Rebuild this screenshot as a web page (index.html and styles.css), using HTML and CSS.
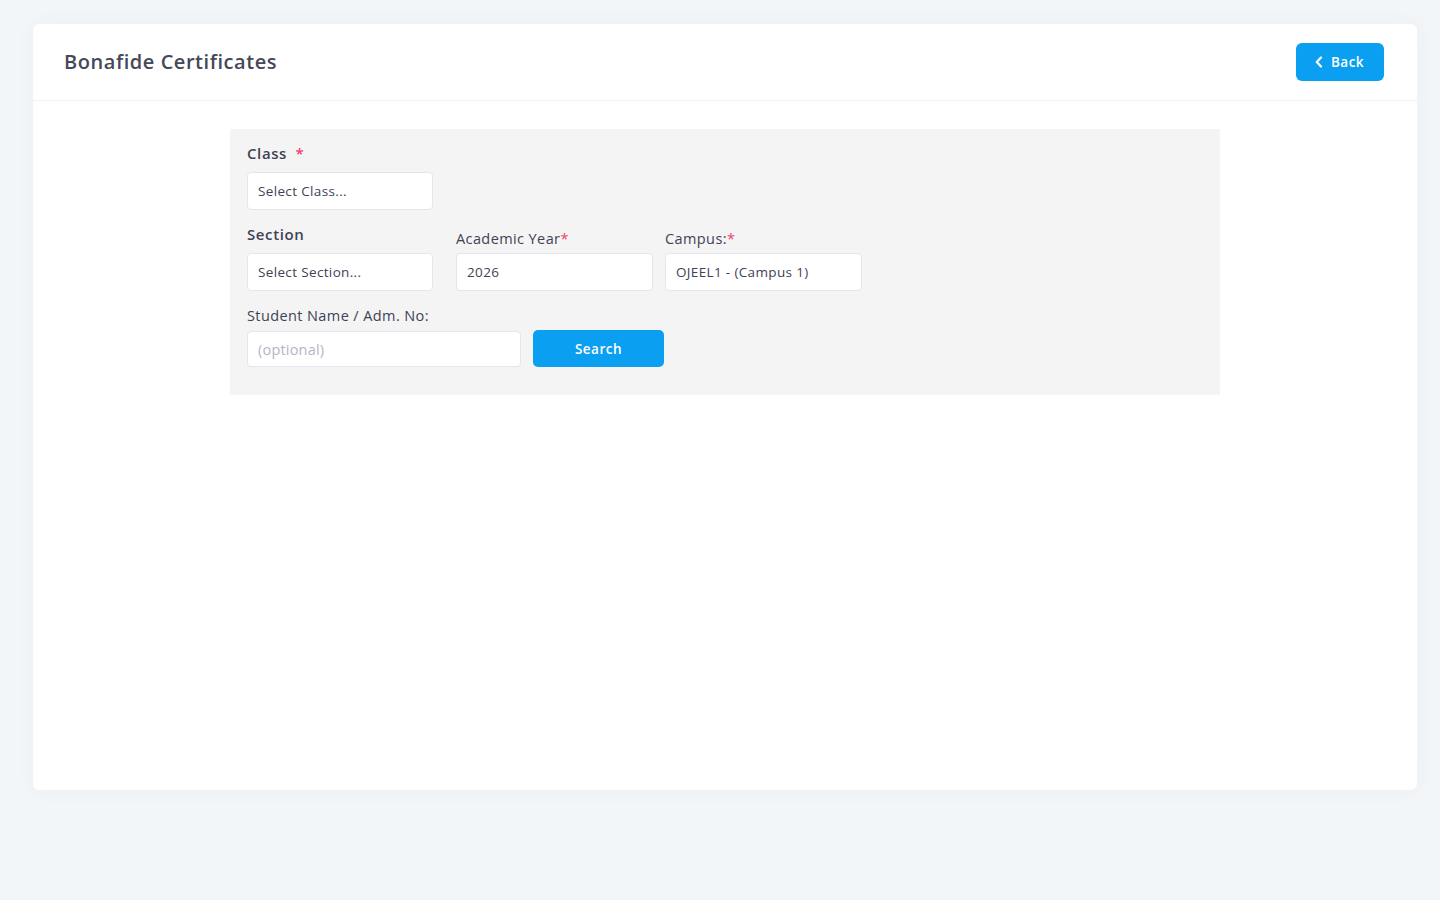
FILE: index.html
```html
<!DOCTYPE html>
<html lang="en">
<head>
<meta charset="utf-8">
<title>Bonafide Certificates</title>
<link rel="stylesheet" href="styles.css">
</head>
<body>
<div class="page">
  <div class="card">
    <div class="card-header">
      <h3 class="card-title">Bonafide Certificates</h3>
      <button class="btn-back" type="button">
        <svg width="10" height="12" viewBox="0 0 10 12" aria-hidden="true"><path d="M7 1.5 L2.8 6 L7 10.5" fill="none" stroke="#fff" stroke-width="2.2" stroke-linecap="round" stroke-linejoin="round"/></svg>
        <span>Back</span>
      </button>
    </div>
    <div class="card-body">
      <div class="filter">
        <div class="row row-class">
          <div class="field w186">
            <label class="lbl lbl-bold">Class <span class="req req-sp">*</span></label>
            <div class="input">Select Class...</div>
          </div>
        </div>
        <div class="row row-section">
          <div class="field w186">
            <label class="lbl lbl-bold">Section</label>
            <div class="input">Select Section...</div>
          </div>
          <div class="field w197 ml23">
            <label class="lbl lbl-low">Academic Year<span class="req">*</span></label>
            <div class="input">2026</div>
          </div>
          <div class="field w197 ml12">
            <label class="lbl lbl-low">Campus:<span class="req">*</span></label>
            <div class="input">OJEEL1 - (Campus 1)</div>
          </div>
        </div>
        <div class="row row-student">
          <div class="field w274">
            <label class="lbl">Student Name / Adm. No:</label>
            <div class="input ph">(optional)</div>
          </div>
          <button class="btn-search" type="button">Search</button>
        </div>
      </div>
    </div>
  </div>
</div>
</body>
</html>
```

FILE: styles.css
```css
* { box-sizing: border-box; }
html, body { margin: 0; padding: 0; }
body {
  background: #f3f6f8;
  font-family: "Open Sans", "Noto Sans", sans-serif;
  color: #3f4254;
  width: 1440px;
  height: 900px;
  overflow: hidden;
}
.page { padding: 24px 23px 0 33px; }
.card {
  background: #ffffff;
  border-radius: 6px;
  height: 766px;
  width: 1384px;
  box-shadow: 0 0 20px rgba(82, 63, 105, 0.04);
}
.card-header {
  height: 77px;
  border-bottom: 1px solid #eff2f5;
  display: flex;
  align-items: center;
  justify-content: space-between;
  padding: 0 33px 0 31px;
}
.card-title {
  margin: 0 0 2px 0;
  font-size: 20px;
  font-weight: 600;
  color: #454857;
  letter-spacing: 0.55px;
}
.btn-back {
  width: 88px;
  height: 38px;
  background: #0a9ff0;
  border: none;
  border-radius: 6px;
  color: #fff;
  font-family: inherit;
  font-size: 13.5px;
  font-weight: 600;
  letter-spacing: 0.5px;
  display: flex;
  align-items: center;
  justify-content: center;
  gap: 7px;
  padding: 0 2px 0 0;
  margin-top: -1px;
}
.card-body { padding: 28px 0 0 197px; }
.filter {
  width: 990px;
  height: 265px;
  background: #f4f4f4;
  padding: 14px 17px 0 17px;
  box-shadow: 0 1px 1px rgba(0,0,0,0.03);
}
.row { display: flex; align-items: flex-end; }
.field { display: flex; flex-direction: column; }
.w186 { width: 186px; }
.w197 { width: 197px; }
.w274 { width: 274px; }
.ml23 { margin-left: 23px; }
.ml12 { margin-left: 12px; }
.lbl {
  font-size: 14.5px;
  font-weight: 400;
  color: #3f4254;
  height: 20px;
  line-height: 20px;
  margin-bottom: 8px;
  letter-spacing: 0.4px;
}
.lbl-bold { font-weight: 600; font-size: 15px; letter-spacing: 0.6px; margin-bottom: 9px; }
.lbl-low { margin-bottom: 4px; }
.req { color: #f1416c; }
.req-sp { margin-left: 4px; }
.input {
  height: 38px;
  background: #fff;
  border: 1px solid #e4e6ef;
  border-radius: 4px;
  padding: 0 10px;
  display: flex;
  align-items: center;
  font-size: 13.5px;
  letter-spacing: 0.35px;
  color: #3f4254;
}
.input.ph { color: #b5b5c3; font-size: 14.5px; height: 36px; letter-spacing: 0.2px; }
.row-section { margin-top: 14px; }
.row-student { margin-top: 15px; }
.row-student .lbl { margin-bottom: 5px; }
.btn-search {
  margin-left: 12px;
  width: 131px;
  height: 37px;
  background: #0a9ff0;
  border: none;
  border-radius: 5px;
  color: #fff;
  font-family: inherit;
  font-size: 13.5px;
  font-weight: 600;
  letter-spacing: 0.5px;
}
```
